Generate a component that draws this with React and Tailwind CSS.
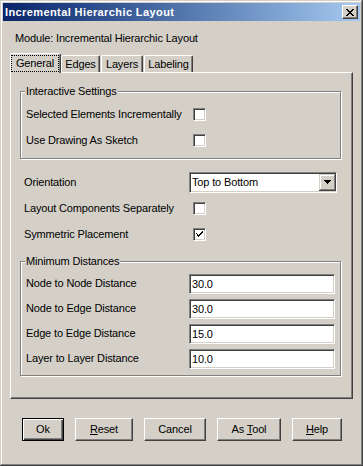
import React from 'react';

const raised = 'border border-t-white border-l-white border-r-[#404040] border-b-[#404040] shadow-[inset_-1px_-1px_0_#808080]';
const sunken = 'border border-t-[#808080] border-l-[#808080] border-r-white border-b-white shadow-[inset_1px_1px_0_#404040,inset_-1px_-1px_0_#d4d0c8]';
const tab = 'h-[17px] flex items-center justify-center border-l border-t border-r border-l-white border-t-white border-r-[#404040] rounded-t-[2px] shadow-[inset_-1px_0_0_#808080]';

const CheckBox = ({ checked }) => (
  <div className={`w-[13px] h-[13px] bg-white ${sunken} flex items-center justify-center`}>
    {checked && (
      <svg width="7" height="7" viewBox="0 0 7 7" shapeRendering="crispEdges">
        <path d="M0 2h1v3h1v1h1v-1h1v-1h1v-1h1v-1h1v-2h-1v1h-1v1h-1v1h-1v1h-1v-1h-1v-1h-1z" fill="#000" />
        <path d="M0 2h1v1h1v1h1v-1h1v-1h1v-1h1v1h-1v1h-1v1h-1v1h-1v-1h-1z" fill="#000" />
      </svg>
    )}
  </div>
);

const Group = ({ title, children }) => (
  <div className="relative border border-[#808080] shadow-[inset_1px_1px_0_#fff,1px_1px_0_#fff] w-[321px]">
    <span className="absolute left-[4px] -top-[7px] px-[1px] bg-[#d4d0c8] leading-[13px]">{title}</span>
    {children}
  </div>
);

const Field = ({ label, value }) => (
  <div className="h-[25px] flex items-center pl-[5px]">
    <span className="w-[163px]">{label}</span>
    <input
      readOnly
      defaultValue={value}
      className={`w-[146px] h-[20px] bg-white pl-[2px] outline-none text-[11px] ${sunken}`}
    />
  </div>
);

const Button = ({ children, width, primary }) => (
  <button
    className={`h-[23px] ${width} flex items-center justify-center ${
      primary
        ? 'border border-black shadow-[inset_1px_1px_0_#fff,inset_-1px_-1px_0_#404040,inset_-2px_-2px_0_#808080]'
        : raised
    }`}
  >
    <span>{children}</span>
  </button>
);

export default function App() {
  return (
    <div
      className="w-[363px] h-[466px] p-[3px] bg-[#d4d0c8] text-black text-[11px] leading-[13px] tracking-[-0.15px] shadow-[inset_-1px_-1px_0_#404040,inset_1px_1px_0_#d4d0c8,inset_-2px_-2px_0_#808080,inset_2px_2px_0_#fff]"
      style={{ fontFamily: '"Liberation Sans", Arial, sans-serif' }}
    >
      <div className="h-[18px] flex items-center justify-between pl-[2px] bg-gradient-to-r from-[#0a246a] to-[#a6caf0]">
        <span className="text-white font-bold text-[11px] tracking-[0.4px]">Incremental Hierarchic Layout</span>
        <div className={`w-[16px] h-[14px] mr-[2px] bg-[#d4d0c8] ${raised} flex items-center justify-center`}>
          <svg width="8" height="7" viewBox="0 0 8 7" shapeRendering="crispEdges">
            <path d="M0 0h2v1h1v1h2v-1h1v-1h2v1h-1v1h-1v1h-1v1h1v1h1v1h1v1h-2v-1h-1v-1h-2v1h-1v1h-2v-1h1v-1h1v-1h1v-1h-1v-1h-1z" fill="#000" />
          </svg>
        </div>
      </div>

      <div className="pl-[12px] mt-[11px] h-[13px]">Module: Incremental Hierarchic Layout</div>

      <div className="ml-[7px] mt-[8px] h-[19px] flex items-end">
        <div className="relative z-10 -mb-px w-[51px] h-[20px] pt-[1px] pl-[1px] bg-[#d4d0c8] border-l border-t border-r border-l-white border-t-white border-r-[#404040] rounded-t-[2px] shadow-[inset_-1px_0_0_#808080]">
          <span className="w-[48px] h-[17px] -ml-px border border-dotted border-black flex items-center justify-center">General</span>
        </div>
        <div className={`w-[39px] mr-[1px] ${tab}`}>Edges</div>
        <div className={`w-[42px] mr-[1px] ${tab}`}>Layers</div>
        <div className={`w-[49px] ${tab}`}>Labeling</div>
      </div>

      <div className="ml-[7px] w-[343px] h-[327px] pl-[9px] border border-t-white border-l-white border-r-[#404040] border-b-[#404040] shadow-[inset_-1px_-1px_0_#808080]">
        <div className="mt-[18px]">
          <Group title="Interactive Settings">
            <div className="pt-[9px] pb-[5px]">
              <div className="h-[26px] flex items-center pl-[5px]">
                <span className="w-[167px]">Selected Elements Incrementally</span>
                <CheckBox />
              </div>
              <div className="h-[26px] flex items-center pl-[5px]">
                <span className="w-[167px]">Use Drawing As Sketch</span>
                <CheckBox />
              </div>
            </div>
          </Group>
        </div>

        <div className="mt-[10px]">
          <div className="h-[26px] flex items-center pl-[4px]">
            <span className="w-[165px]">Orientation</span>
            <div className={`w-[148px] h-[21px] bg-white flex items-center justify-between pl-[2px] ${sunken}`}>
              <span>Top to Bottom</span>
              <div className="w-[17px] h-[17px] bg-[#d4d0c8] flex items-center justify-center shadow-[inset_-1px_-1px_0_#404040,inset_1px_1px_0_#d4d0c8,inset_-2px_-2px_0_#808080,inset_2px_2px_0_#fff]">
                <svg width="7" height="4" viewBox="0 0 7 4" shapeRendering="crispEdges">
                  <path d="M0 0h7v1h-1v1h-1v1h-1v1h-1v-1h-1v-1h-1v-1h-1z" fill="#000" />
                </svg>
              </div>
            </div>
          </div>
          <div className="h-[26px] flex items-center pl-[4px]">
            <span className="w-[169px]">Layout Components Separately</span>
            <CheckBox />
          </div>
          <div className="h-[26px] flex items-center pl-[4px]">
            <span className="w-[169px]">Symmetric Placement</span>
            <CheckBox checked />
          </div>
        </div>

        <div className="mt-[14px]">
          <Group title="Minimum Distances">
            <div className="pt-[9px] pb-[4px]">
              <Field label="Node to Node Distance" value="30.0" />
              <Field label="Node to Edge Distance" value="30.0" />
              <Field label="Edge to Edge Distance" value="15.0" />
              <Field label="Layer to Layer Distance" value="10.0" />
            </div>
          </Group>
        </div>
      </div>

      <div className="mt-[19px] pl-[19px] flex gap-[11px]">
        <Button width="w-[42px]" primary>Ok</Button>
        <Button width="w-[58px]"><u>R</u>eset</Button>
        <Button width="w-[62px]">Cancel</Button>
        <Button width="w-[64px]">As <u>T</u>ool</Button>
        <Button width="w-[50px]"><u>H</u>elp</Button>
      </div>
    </div>
  );
}
